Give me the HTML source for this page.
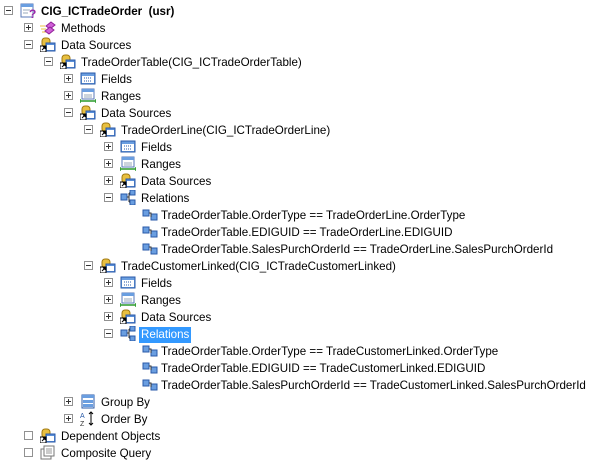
<!DOCTYPE html><html><head><style>
body{margin:0;width:597px;height:459px;background:#fff;overflow:hidden;font-family:"Liberation Sans",sans-serif;font-size:11.6px;color:#000;position:relative}
.r{position:absolute;height:17px;line-height:17px;white-space:nowrap}
.e{position:absolute;width:7px;height:7px;border:1px solid #919191;background:#fff;top:4px}
.e:before{content:"";position:absolute;left:1px;top:3px;width:5px;height:1px;background:#333}
.p:after{content:"";position:absolute;left:3px;top:1px;width:1px;height:5px;background:#333}
.n:before{display:none}
.i{position:absolute;top:1px;width:16px;height:15px}
.t{position:absolute;top:0}
.sel{background:#3399ff;color:#fff;padding:0 2px;margin-left:-2px;display:inline-block;line-height:16px}
</style></head><body>
<svg width="0" height="0" style="position:absolute"><defs>
<g id="ds"><rect x="2" y="1" width="8" height="9" rx="3" fill="#e8c040" stroke="#a07810"/><rect x="6" y="6" width="9" height="8" fill="#5a8fd8" stroke="#2a5aa8"/><rect x="7" y="8" width="7" height="5" fill="#fff"/><rect x="0" y="9" width="6" height="6" fill="#fff" stroke="#000"/><path d="M2 13l3-3M3 10h2v2" stroke="#000" fill="none"/></g>
<g id="fl"><rect x="1" y="2" width="14" height="11" fill="#6a9ee0" stroke="#2a5aa8"/><rect x="2" y="5" width="12" height="7" fill="#fff"/><path d="M4 7h8M4 10h8" stroke="#2a5aa8" stroke-dasharray="1 1"/></g>
<g id="rg"><rect x="2" y="1" width="12" height="10" fill="#fff" stroke="#5a7ab8"/><rect x="2" y="1" width="12" height="3" fill="#6a9ee0"/><path d="M4 7h8M4 9h8" stroke="#9ab"/><path d="M0 13h16M0 11v4M16 11v4" stroke="#2a9a2a" stroke-width="1.5"/></g>
<g id="rl"><rect x="1" y="4" width="6" height="6" fill="#6a9ee0" stroke="#2a5aa8"/><rect x="10" y="0" width="5" height="5" fill="#6a9ee0" stroke="#2a5aa8"/><rect x="10" y="10" width="5" height="5" fill="#6a9ee0" stroke="#2a5aa8"/><path d="M7 7h2M9 3v9M9 3h1M9 12h1" stroke="#333"/></g>
<g id="re"><rect x="1" y="3" width="6" height="6" fill="#6a9ee0" stroke="#2a5aa8"/><rect x="9" y="7" width="6" height="6" fill="#6a9ee0" stroke="#2a5aa8"/><path d="M7 6h2v4" stroke="#333" fill="none"/></g>
</defs></svg>
<div id="c"></div>
<script>
var rows=[[0,'m','q','<b>CIG_ICTradeOrder&nbsp; (usr)</b>'],[1,'p','me','Methods'],[1,'m','ds','Data Sources'],[2,'m','ds','TradeOrderTable(CIG_ICTradeOrderTable)'],[3,'p','fl','Fields'],[3,'p','rg','Ranges'],[3,'m','ds','Data Sources'],[4,'m','ds','TradeOrderLine(CIG_ICTradeOrderLine)'],[5,'p','fl','Fields'],[5,'p','rg','Ranges'],[5,'p','ds','Data Sources'],[5,'m','rl','Relations'],[6,'','re','TradeOrderTable.OrderType == TradeOrderLine.OrderType'],[6,'','re','TradeOrderTable.EDIGUID == TradeOrderLine.EDIGUID'],[6,'','re','TradeOrderTable.SalesPurchOrderId == TradeOrderLine.SalesPurchOrderId'],[4,'m','ds','TradeCustomerLinked(CIG_ICTradeCustomerLinked)'],[5,'p','fl','Fields'],[5,'p','rg','Ranges'],[5,'p','ds','Data Sources'],[5,'m','rl','<span class="sel">Relations</span>'],[6,'','re','TradeOrderTable.OrderType == TradeCustomerLinked.OrderType'],[6,'','re','TradeOrderTable.EDIGUID == TradeCustomerLinked.EDIGUID'],[6,'','re','TradeOrderTable.SalesPurchOrderId == TradeCustomerLinked.SalesPurchOrderId'],[3,'p','gb','Group By'],[3,'p','ob','Order By'],[1,'n','ds','Dependent Objects'],[1,'n','cq','Composite Query']];
var icons={ds:'<use href="#ds"/>',fl:'<use href="#fl"/>',rg:'<use href="#rg"/>',rl:'<use href="#rl"/>',re:'<use href="#re"/>',
q:'<rect x="1" y="1" width="12" height="13" fill="#fff" stroke="#5a7ab8"/><rect x="1" y="1" width="12" height="3" fill="#6a9ee0"/><path d="M3 7h7M3 10h5" stroke="#9ab"/><text x="9" y="15" font-size="12" font-weight="bold" fill="#9a2aa8" font-family="Liberation Sans">?</text>',
me:'<path d="M0 6h5M1 9h5M2 12h5" stroke="#e8c040"/><path d="M6 6l5-4 4 3-5 4z" fill="#d060d8" stroke="#902098"/><path d="M5 11l5-4 4 3-5 4z" fill="#d060d8" stroke="#902098"/>',
gb:'<rect x="2" y="1" width="12" height="13" fill="#fff" stroke="#2a5aa8"/><rect x="2" y="1" width="12" height="3" fill="#6a9ee0"/><rect x="3" y="6" width="10" height="3" fill="#6a9ee0"/><rect x="3" y="10" width="10" height="3" fill="#6a9ee0"/>',
ob:'<text x="0" y="7" font-size="7" font-family="Liberation Sans" fill="#2a5aa8">A</text><text x="0" y="15" font-size="7" font-family="Liberation Sans" fill="#333">Z</text><path d="M11 1v13M9 3l2-2 2 2M9 12l2 2 2-2" stroke="#000" fill="none"/>',
cq:'<rect x="1" y="4" width="10" height="10" fill="#fff" stroke="#777"/><rect x="4" y="1" width="10" height="10" fill="#fff" stroke="#777"/><path d="M6 4h6M6 6h6M6 8h6" stroke="#999"/>'};
var h='';rows.forEach(function(r,k){var L=r[0],y=2+17*k;h+='<div class="r" style="top:'+y+'px;left:0;width:597px">';
if(r[1])h+='<div class="e '+(r[1]=='p'?'p':r[1]=='n'?'n':'')+'" style="left:'+(4+20*L)+'px"></div>';
h+='<svg class="i" style="left:'+(L==6?142:20+20*L)+'px" viewBox="0 0 16 15">'+icons[r[2]]+'</svg>';
h+='<span class="t" style="left:'+(41+20*L)+'px;top:1px">'+r[3]+'</span></div>';});
document.getElementById('c').innerHTML=h;
</script>
</body></html>
